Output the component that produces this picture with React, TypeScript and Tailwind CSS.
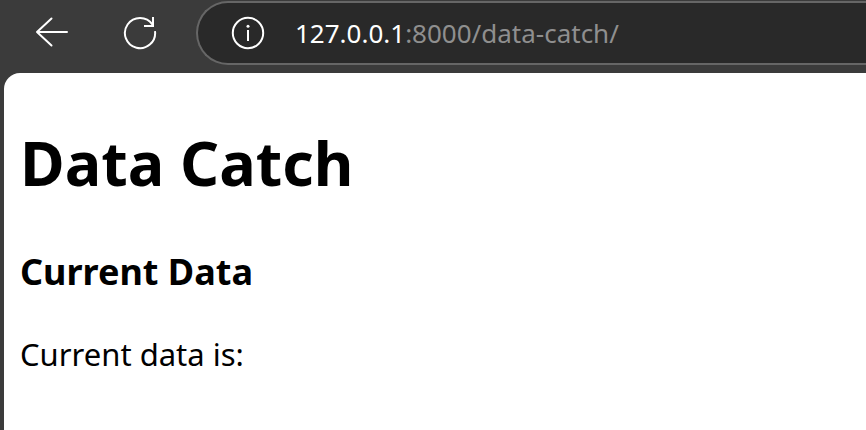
import React from "react";

function BackIcon() {
  return (
    <svg width="34" height="34" viewBox="0 0 34 34" fill="none" stroke="currentColor" strokeWidth="2" strokeLinecap="round" strokeLinejoin="round" aria-hidden="true">
      <path d="M32 16H2M16.500 2.500L2 16l14.500 13.500" />
    </svg>
  );
}

function ReloadIcon() {
  return (
    <svg width="34" height="34" viewBox="0 0 34 34" fill="none" stroke="currentColor" strokeWidth="2" aria-hidden="true">
      <path d="M32 15.200A15.100 15.100 0 1 1 29.500 8.600" />
      <path d="M30 1v9h-9" />
    </svg>
  );
}

function InfoIcon() {
  return (
    <svg width="34" height="34" viewBox="0 0 34 34" fill="none" stroke="currentColor" strokeWidth="2" aria-hidden="true">
      <circle cx="17" cy="17" r="15.200" />
      <path d="M17 14v11" />
      <circle cx="17" cy="10.300" r="1.500" fill="currentColor" stroke="none" />
    </svg>
  );
}

export default function App() {
  return (
    <div className="flex min-h-screen flex-col overflow-hidden bg-[#3b3b3b] font-['Noto_Sans','Noto_Sans_CJK_KR',sans-serif]">
      <header className="flex h-[73px] items-start text-white">
        <nav className="flex h-[66px] shrink-0 items-center gap-[54px] pl-[35px]">
          <button type="button" aria-label="Back"><BackIcon /></button>
          <button type="button" aria-label="Reload"><ReloadIcon /></button>
        </nav>
        <div className="ml-[39px] mt-px flex h-16 flex-1 items-center rounded-l-full border-2 border-r-0 border-[#666666] bg-[#292929] pl-[33px]">
          <button type="button" aria-label="Site information"><InfoIcon /></button>
          <a href="#" className="ml-[30px] text-[26px] text-[#8f8f8f]">
            <span className="text-white">127.0.0.1</span>:8000/data-catch/
          </a>
        </div>
      </header>
      <main className="ml-1 flex-1 rounded-tl-2xl bg-white px-4 pt-12 text-black">
        <h1 className="text-[61px] leading-[84px] font-bold">Data Catch</h1>
        <h3 className="mt-[43px] text-[36px] leading-12 font-bold">Current Data</h3>
        <p className="mt-9 text-[31px] leading-11">Current data is:</p>
      </main>
    </div>
  );
}
